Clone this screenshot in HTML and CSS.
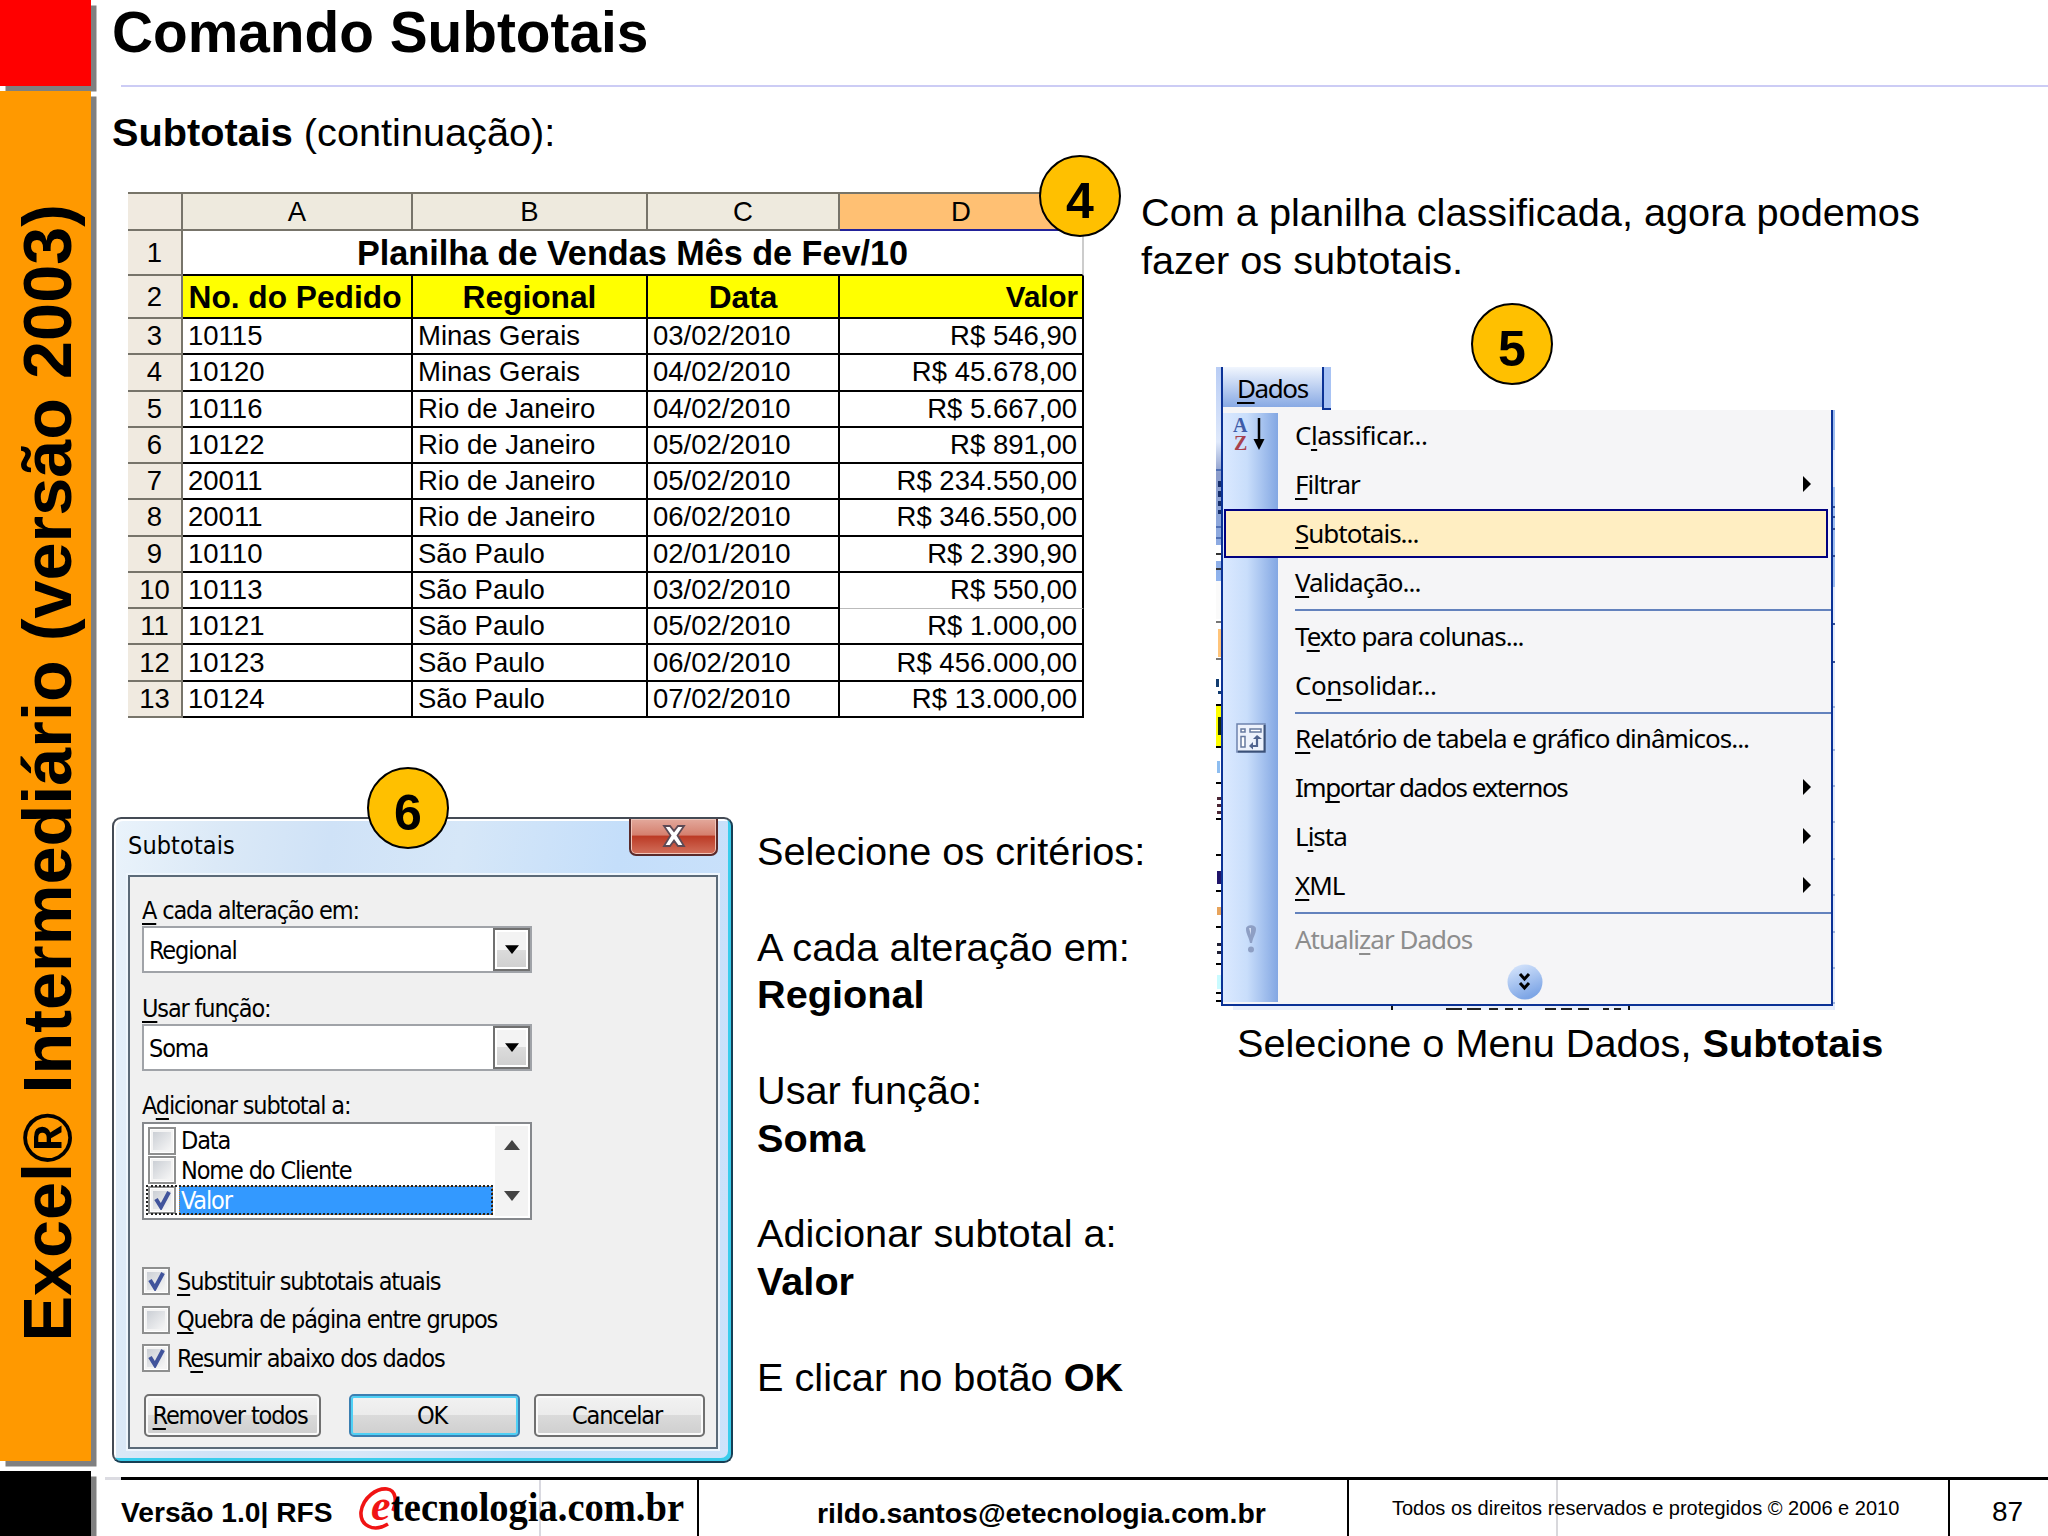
FILE: index.html
```html
<!DOCTYPE html>
<html lang="pt-BR">
<head>
    <meta charset="UTF-8">
    <title>Comando Subtotais</title>
    <link rel="stylesheet" href="styles.css">
</head>
<body>
<div class="slide">
    <aside class="sidebar">
        <div class="block red"></div>
        <div class="block orange"><span class="course">Excel® Intermediário (versão 2003)</span></div>
        <div class="block black"></div>
    </aside>

    <div class="page">
        <h1 class="title">Comando Subtotais</h1>
        <p class="subtitle"><b>Subtotais</b> (continuação):</p>

        <div class="content">
            <div class="left">
                <div class="sheet">
                    <div class="head corner"></div>
                    <div class="head">A</div>
                    <div class="head">B</div>
                    <div class="head">C</div>
                    <div class="head selected">D</div>

                    <div class="num">1</div>
                    <div class="cell merged">Planilha de Vendas Mês de Fev/10</div>

                    <div class="num">2</div>
                    <div class="cell yellow pedido">No. do Pedido</div>
                    <div class="cell yellow">Regional</div>
                    <div class="cell yellow">Data</div>
                    <div class="cell yellow valor">Valor</div>

                    <div class="num">3</div><div class="cell">10115</div><div class="cell">Minas Gerais</div><div class="cell">03/02/2010</div><div class="cell money">R$ 546,90</div>
                    <div class="num">4</div><div class="cell">10120</div><div class="cell">Minas Gerais</div><div class="cell">04/02/2010</div><div class="cell money">R$ 45.678,00</div>
                    <div class="num">5</div><div class="cell">10116</div><div class="cell">Rio de Janeiro</div><div class="cell">04/02/2010</div><div class="cell money">R$ 5.667,00</div>
                    <div class="num">6</div><div class="cell">10122</div><div class="cell">Rio de Janeiro</div><div class="cell">05/02/2010</div><div class="cell money">R$ 891,00</div>
                    <div class="num">7</div><div class="cell">20011</div><div class="cell">Rio de Janeiro</div><div class="cell">05/02/2010</div><div class="cell money">R$ 234.550,00</div>
                    <div class="num">8</div><div class="cell">20011</div><div class="cell">Rio de Janeiro</div><div class="cell">06/02/2010</div><div class="cell money">R$ 346.550,00</div>
                    <div class="num">9</div><div class="cell">10110</div><div class="cell">São Paulo</div><div class="cell">02/01/2010</div><div class="cell money">R$ 2.390,90</div>
                    <div class="num">10</div><div class="cell">10113</div><div class="cell">São Paulo</div><div class="cell">03/02/2010</div><div class="cell money thin">R$ 550,00</div>
                    <div class="num">11</div><div class="cell">10121</div><div class="cell">São Paulo</div><div class="cell">05/02/2010</div><div class="cell money">R$ 1.000,00</div>
                    <div class="num">12</div><div class="cell">10123</div><div class="cell">São Paulo</div><div class="cell">06/02/2010</div><div class="cell money">R$ 456.000,00</div>
                    <div class="num">13</div><div class="cell">10124</div><div class="cell">São Paulo</div><div class="cell">07/02/2010</div><div class="cell money">R$ 13.000,00</div>
                    <span class="badge badge4">4</span>
                </div>

                <div class="lower">
                    <div class="dialog">
                        <div class="dialog-title">
                            <span class="dialog-name">Subtotais</span>
                            <span class="close">
                                <svg width="26" height="24" viewBox="0 0 26 24"><path d="M3 2h6l4 5 4-5h6l-6.500 9.500L23 22h-6l-4-5.500L9 22H3l6.500-10.500z" fill="#fff" stroke="#5c4a55" stroke-width="1.800"/></svg>
                            </span>
                        </div>
                        <div class="dialog-body">
                            <div class="label l1"><u>A</u> cada alteração em:</div>
                            <div class="combo"><span>Regional</span><i class="drop"><svg width="14" height="9" viewBox="0 0 16 10"><path d="M0 0h16L8 10z"/></svg></i></div>
                            <div class="label l2"><u>U</u>sar função:</div>
                            <div class="combo"><span>Soma</span><i class="drop"><svg width="14" height="9" viewBox="0 0 16 10"><path d="M0 0h16L8 10z"/></svg></i></div>
                            <div class="label l3">A<u>d</u>icionar subtotal a:</div>
                            <div class="list">
                                <div class="options">
                                    <div class="option"><i class="check"></i><span>Data</span></div>
                                    <div class="option"><i class="check"></i><span>Nome do Cliente</span></div>
                                    <div class="option active"><i class="check"><svg width="17" height="20" viewBox="0 0 17 20"><path d="M2 9l5 8L15 2" fill="none" stroke="#41549c" stroke-width="4"/></svg></i><span>Valor</span></div>
                                </div>
                                <div class="scroll">
                                    <svg width="16" height="10"><path d="M0 10h16L8 0z" fill="#444"/></svg>
                                    <svg width="16" height="10"><path d="M0 0h16L8 10z" fill="#444"/></svg>
                                </div>
                            </div>
                            <div class="checks">
                                <div class="row"><i class="check"><svg width="17" height="20" viewBox="0 0 17 20"><path d="M2 9l5 8L15 2" fill="none" stroke="#41549c" stroke-width="4"/></svg></i><span><u>S</u>ubstituir subtotais atuais</span></div>
                                <div class="row"><i class="check"></i><span><u>Q</u>uebra de página entre grupos</span></div>
                                <div class="row"><i class="check"><svg width="17" height="20" viewBox="0 0 17 20"><path d="M2 9l5 8L15 2" fill="none" stroke="#41549c" stroke-width="4"/></svg></i><span>R<u>e</u>sumir abaixo dos dados</span></div>
                            </div>
                            <div class="buttons">
                                <div class="btn remove"><u>R</u>emover todos</div>
                                <div class="btn ok">OK</div>
                                <div class="btn">Cancelar</div>
                            </div>
                        </div>
                        <span class="badge badge6">6</span>
                    </div>
                    <div class="criteria">
                        <p>Selecione os critérios:</p>
                        <p>A cada alteração em:<br><b>Regional</b></p>
                        <p>Usar função:<br><b>Soma</b></p>
                        <p>Adicionar subtotal a:<br><b>Valor</b></p>
                        <p>E clicar no botão <b>OK</b></p>
                    </div>
                </div>
            </div>

            <div class="right">
                <p class="intro">Com a planilha classificada, agora podemos<br>fazer os subtotais.</p>
                <div class="shot">
                    <svg class="edge" width="5" height="643">
                        <defs>
                            <linearGradient id="bar" x1="0" y1="0" x2="0" y2="1">
                                <stop offset="0" stop-color="#b9cdf5"/><stop offset=".35" stop-color="#dfe9fb"/>
                                <stop offset=".5" stop-color="#8b9ccb"/><stop offset="1" stop-color="#8fb3ee"/>
                            </linearGradient>
                        </defs>
                        <rect width="5" height="214" fill="url(#bar)"/>
                        <path d="M0 103h5M0 160h5M0 171h5" stroke="#4f6fb4" stroke-width="2"/>
                        <path d="M2 114h3v6h-3zM2 124h3v6h-3zM2 134h3v5h-3zM2 143h3v4h-3z" fill="#152d6b"/>
                        <path d="M0 178h5v16h-5z" fill="#fff"/>
                        <path d="M0 187h5M0 202h5" stroke="#333" stroke-width="2"/>
                        <path d="M0 214h5v38h-5z" fill="#fafafa"/>
                        <path d="M2 262h3v28h-3z" fill="#ffc47a"/>
                        <path d="M0 255h5M0 292h5" stroke="#777" stroke-width="2"/>
                        <path d="M0 312h3v8h-3zM2 324h3v3h-3z" fill="#123c70"/>
                        <path d="M0 338h5v42h-5z" fill="#ff0"/>
                        <path d="M2 350h3v18h-3z" fill="#152b08"/>
                        <path d="M0 338h5M0 380h5M0 416h5M0 452h5M0 488h5M0 524h5M0 560h5M0 597h5M0 626h5M0 634h5" stroke="#000" stroke-width="2"/>
                        <path d="M1 394h3v12h-3z" fill="#8dbdf0"/>
                        <path d="M1 430h4v3h-4zM1 437h4v3h-4zM1 444h4v3h-4z" fill="#4b2634"/>
                        <path d="M1 504h4v13h-4z" fill="#20146a"/>
                        <path d="M1 540h4v8h-4z" fill="#e8a45c"/>
                        <path d="M1 576h4v3h-4zM1 584h4v3h-4z" fill="#202034"/>
                        <path d="M1 608h4v14h-4z" fill="#c9fbff"/>
                    </svg>
                    <div class="menu-wrap">
                        <div class="tabs"><div class="tab"><u>D</u>ados</div><div class="tab-rest"></div></div>
                        <div class="menu">
                            <div class="item">
                                <span class="icon az"><svg width="36" height="40" viewBox="0 0 36 40"><text x="2" y="17" font-size="20" fill="#3f5ca8">A</text><text x="3" y="35" font-size="20" fill="#a8414d">Z</text><path d="M28 3v26" stroke="#000" stroke-width="2.500"/><path d="M22.500 24h11L28 35z"/></svg></span>
                                <span class="loose">C<u>l</u>assificar...</span>
                            </div>
                            <div class="item"><span class="icon"></span><span><u>F</u>iltrar</span><i class="arrow"></i></div>
                            <div class="item hover"><span class="icon"></span><span><u>S</u>ubtotais...</span></div>
                            <div class="item"><span class="icon"></span><span><u>V</u>alidação...</span></div>
                            <div class="sep"></div>
                            <div class="item"><span class="icon"></span><span>T<u>e</u>xto para colunas...</span></div>
                            <div class="item"><span class="icon"></span><span class="loose">Co<u>n</u>solidar...</span></div>
                            <div class="sep"></div>
                            <div class="item">
                                <span class="icon"><svg width="30" height="30" viewBox="0 0 30 30"><path d="M1 1h28v28H1z" fill="#edf2fc" stroke="#6d82ad" stroke-width="1.500"/><path d="M28.500 2v26.500H2" fill="none" stroke="#3c5278" stroke-width="2"/><path d="M5 6h4v3H5zM14 6h11v3H14zM5 13.500h4V24H5z" fill="#fff" stroke="#66799f" stroke-width="1.500"/><path d="M15 23h6v-7" fill="none" stroke="#50648f" stroke-width="2.200"/><path d="M17 16l4-4 5 4zM17 19l-4 4 4 3.500z" fill="#50648f"/></svg></span>
                                <span><u>R</u>elatório de tabela e gráfico dinâmicos...</span>
                            </div>
                            <div class="item"><span class="icon"></span><span class="tight">Im<u>p</u>ortar dados externos</span><i class="arrow"></i></div>
                            <div class="item"><span class="icon"></span><span>L<u>i</u>sta</span><i class="arrow"></i></div>
                            <div class="item"><span class="icon"></span><span><u>X</u>ML</span><i class="arrow"></i></div>
                            <div class="sep"></div>
                            <div class="item disabled">
                                <span class="icon"><svg width="14" height="30" viewBox="0 0 14 30"><path d="M2 5c0-5 10-5 10 0 0 5-3 8-4 14H6C5 13 2 10 2 5z" fill="#8e9fc4"/><path d="M5 4h2v7z" fill="#d5dff3"/><circle cx="7" cy="25.500" r="3" fill="#8e9fc4"/></svg></span>
                                <span>Atuali<u>z</u>ar Dados</span>
                            </div>
                            <div class="more"><svg width="36" height="36" viewBox="0 0 36 36"><defs><linearGradient id="ball" x1="0" y1="0" x2=".4" y2="1"><stop offset="0" stop-color="#dce9fd"/><stop offset="1" stop-color="#7ea6e6"/></linearGradient></defs><circle cx="18" cy="18" r="17.500" fill="url(#ball)"/><path d="M13 10l4.500 5 4.500-5M13 19l4.500 5 4.500-5" fill="none" stroke="#000" stroke-width="3"/></svg></div>
                        </div>
                        <svg class="below" width="612" height="4"><rect x="12" width="600" height="4" fill="#eaf0fc"/><path d="M171 0v4M408 0v4" stroke="#111" stroke-width="2"/><path d="M225 3h16M246 3h14M268 3h9M284 3h8M297 3h4M324 3h11M340 3h11M357 3h11M382 3h6M393 3h7" stroke="#222" stroke-width="2"/></svg>
                    </div>
                    <svg class="edge" width="2" height="643"><rect y="43" width="3" height="600" fill="#e3ebfb"/><path d="M0 43h3v40h-3zM0 120h3v100h-3z" fill="#9dbcf0"/><path d="M0 140h3M0 150h3M0 162h3M0 189h3M0 257h3M0 295h3" stroke="#334f96" stroke-width="2"/><path d="M0 340h3M0 383h3M0 419h3M0 455h3M0 492h3M0 528h3M0 565h3M0 601h3M0 636h3" stroke="#9fb4de" stroke-width="2"/></svg>
                    <span class="badge badge5">5</span>
                </div>
                <p class="caption">Selecione o Menu Dados, <b>Subtotais</b></p>
            </div>
        </div>

        <footer class="footer">
            <div class="foot version">
                <b>Versão 1.0| RFS</b>
                <svg class="logo" width="342" height="56" viewBox="0 0 342 56">
                    <path d="M33 44C18 53 5 45 6 32 8 17 22 8 32 9c9 1 10 12 6 22" fill="none" stroke="#f01414" stroke-width="3.600"/>
                    <text class="logo-e" x="16" y="40">e</text>
                    <text class="logo-name" x="36" y="41" textLength="293" lengthAdjust="spacingAndGlyphs">tecnologia.com.br</text>
                </svg>
            </div>
            <div class="foot mail"><b>rildo.santos@etecnologia.com.br</b></div>
            <div class="foot rights"><span>Todos os direitos reservados e protegidos © 2006 e 2010</span></div>
            <div class="foot number">87</div>
        </footer>
    </div>
</div>
</body>
</html>
```
FILE: styles.css
```css
* {
    box-sizing: border-box;
}
body {
    margin: 0;
    background: #fff;
    color: #000;
    font-family: "Liberation Sans", Arial, sans-serif;
    font-size: 39.700px;
}
p, h1 {
    margin: 0;
}
i {
    font-style: normal;
}
svg {
    display: block;
}
.slide {
    display: flex;
    width: 2048px;
    height: 1536px;
    overflow: hidden;
}

/* coloured strip on the left */
.sidebar {
    width: 112px;
    display: flex;
    flex-direction: column;
}
.block {
    width: 91px;
    box-shadow: 5.5px 5.5px 0 #808080;
}
.red {
    height: 86px;
    background: #f00;
}
.orange {
    height: 1370px;
    margin-top: 5px;
    background: #f90;
    display: flex;
    align-items: center;
    justify-content: center;
}
.black {
    height: 65px;
    margin-top: 10px;
    background: #000;
}
.course {
    writing-mode: vertical-rl;
    text-orientation: sideways;
    transform: rotate(180deg);
    padding-right: 4px;
    padding-top: 6px;
    font-size: 68.400px;
    font-weight: bold;
    line-height: 91px;
    white-space: nowrap;
}

.page {
    flex: 1;
    display: flex;
    flex-direction: column;
}
.title {
    height: 88px;
    font-size: 56.800px;
    line-height: 65px;
    background: linear-gradient(#ccccf5, #ccccf5) 9px 85px / 100% 2px no-repeat;
}
.subtitle {
    height: 104px;
    padding-top: 20px;
    line-height: 48px;
}
.content {
    display: flex;
    height: 1285px;
}
.left {
    width: 1029px;
}
.right {
    flex: 1;
}
.badge {
    position: absolute;
    width: 82px;
    height: 82px;
    border: 2px solid #000;
    border-radius: 50%;
    background: #ffc000;
    font-family: "Liberation Sans", Arial, sans-serif;
    font-size: 50px;
    font-weight: bold;
    line-height: 88px;
    text-align: center;
}

/* spreadsheet */
.sheet {
    position: relative;
    width: 956px;
    margin-left: 16px;
    display: grid;
    grid-template-columns: 55px 230px 235px 192px 244px;
    grid-template-rows: 37px 45px 43px repeat(11, 36.270px);
    border-top: 2px solid #777468;
    font-size: 27.500px;
}
.head, .num, .cell {
    display: flex;
    align-items: center;
    border-right: 2px solid #000;
    border-bottom: 2px solid #000;
    line-height: 32px;
    white-space: nowrap;
}
.head, .num {
    justify-content: center;
    background: #eeeade;
    border-color: #77746a;
}
.corner, .num {
    background: #f0eae0;
}
.head.selected {
    background: #ffc073;
    border-bottom-color: #22229a;
}
.cell {
    padding-left: 5px;
}
.merged {
    grid-column: span 4;
    justify-content: center;
    padding-left: 0;
    border-right-color: #ccc;
    font-size: 34.200px;
    font-weight: bold;
}
.yellow {
    justify-content: center;
    background: #ff0;
    font-size: 31.700px;
    font-weight: bold;
    padding-left: 0;
}
.pedido {
    padding-right: 4px;
}
.yellow.valor {
    justify-content: flex-end;
    padding-right: 4px;
    font-size: 29.500px;
}
.money {
    justify-content: flex-end;
    padding-right: 5px;
}
.thin {
    border-bottom: 1px solid #bbb;
}
.badge4 {
    left: 911px;
    top: -39px;
}

/* dialog */
.lower {
    display: flex;
    margin-top: 99px;
}
.dialog {
    position: relative;
    width: 622px;
    height: 646px;
    padding: 0 13px 0 14px;
    border: 2px solid #444b55;
    border-right-color: #163f55;
    border-bottom-color: #163f55;
    border-radius: 9px;
    background: linear-gradient(100deg, #eaf3fb 0, #dbe9f7 15%, #cfe2f7 30%, #d6e7f8 48%, #c4defa 70%, #cde3fb 100%);
    box-shadow: inset -3px -3px 0 #39cdec, inset 2px 2px 0 #fff;
    font-family: "DejaVu Sans Condensed", "DejaVu Sans", sans-serif;
    font-size: 25px;
    letter-spacing: -1.150px;
}
.dialog u, .menu-wrap u {
    text-decoration-thickness: 2px;
    text-underline-offset: 4px;
    text-decoration-skip-ink: none;
}
.dialog-title {
    height: 56px;
    display: flex;
    justify-content: space-between;
}
.dialog-name {
    line-height: 54px;
    letter-spacing: .100px;
}
.close {
    width: 89px;
    height: 37px;
    display: flex;
    align-items: center;
    justify-content: center;
    border: 2px solid #5a2a2a;
    border-top: 0;
    border-radius: 0 0 7px 7px;
    background: linear-gradient(#e3a99c 0, #d5806f 45%, #bc3b26 50%, #d2705c 100%);
    box-shadow: inset 0 0 0 1px #f0c5ba;
}
.dialog-body {
    height: 574px;
    border: 2px solid #5b6a78;
    background: #f0f0f0;
    padding: 20px 11px 0 12px;
    box-shadow: 0 0 0 2px #eef6fd;
}
.label {
    height: 28px;
    line-height: 28px;
    white-space: nowrap;
}
.l1 {
    margin-bottom: 1px;
}
.l2 {
    margin-top: 22px;
    margin-bottom: 1px;
}
.l3 {
    margin-top: 21px;
}
.combo {
    width: 390px;
    height: 47px;
    display: flex;
    justify-content: space-between;
    border: 2px solid #a0a3a8;
    background: #fff;
    line-height: 45px;
    padding-left: 5px;
}
.drop {
    width: 37px;
    display: flex;
    align-items: center;
    justify-content: center;
    border: 2px solid #707070;
    background: linear-gradient(#f3f3f3 50%, #dcdcdc 50%, #cfcfcf);
    box-shadow: inset 0 0 0 2px #fff;
}
.list {
    width: 390px;
    height: 98px;
    margin-top: 2px;
    display: flex;
    justify-content: space-between;
    border: 2px solid #85888c;
    background: #fff;
    padding: 2px;
}
.options {
    width: 347px;
}
.option {
    height: 29.700px;
    display: flex;
    align-items: center;
    gap: 3px;
    padding-left: 2px;
}
.option span {
    flex: 1;
    line-height: 29px;
    padding-left: 2px;
}
.option.active {
    outline: 2px dotted #222;
    outline-offset: -2px;
}
.active span {
    background: #3399ff;
    color: #fff;
    outline: 1px dotted #c47a2c;
    outline-offset: -1px;
}
.scroll {
    width: 33px;
    background: #f3f3f3;
    display: flex;
    flex-direction: column;
    justify-content: space-between;
    align-items: center;
    padding: 14px 0 15px;
}
.check {
    width: 28px;
    height: 28px;
    flex: none;
    display: flex;
    align-items: center;
    justify-content: center;
    border: 2px solid #8e8f8f;
    background: linear-gradient(135deg, #cbcfd5, #f6f6f6) content-box, #f4f4f4;
    padding: 3px;
    box-shadow: inset 0 0 0 1px #fff;
}
.checks {
    margin-top: 42px;
}
.row {
    height: 38.500px;
    display: flex;
    align-items: center;
    gap: 7px;
    white-space: nowrap;
}
.buttons {
    display: flex;
    margin: 17px 0 0 2px;
}
.btn {
    width: 171px;
    height: 43px;
    border: 2px solid #707070;
    border-radius: 5px;
    background: linear-gradient(#f2f2f2 0, #ebebeb 50%, #dadada 50%, #cfcfcf 100%);
    box-shadow: inset 0 0 0 2px #fafafa;
    line-height: 39px;
    text-align: center;
    white-space: nowrap;
    padding-right: 5px;
}
.remove {
    width: 177px;
}
.ok {
    margin: 0 14px 0 28px;
    border-color: #3c7fb1;
    box-shadow: inset 0 0 0 2px #4fd0f5;
}
.badge6 {
    left: 253px;
    top: -52px;
    letter-spacing: 0;
}
.criteria {
    margin-left: 24px;
    padding-top: 11px;
    line-height: 47.800px;
    white-space: nowrap;
}
.criteria p {
    margin-bottom: 47.800px;
}

/* menu */
.intro {
    height: 175px;
    line-height: 48px;
    margin-top: -4px;
    margin-bottom: 4px;
    white-space: nowrap;
}
.shot {
    position: relative;
    width: 620px;
    height: 643px;
    margin-left: 75px;
    display: flex;
    font-family: "Noto Sans", "Open Sans", sans-serif;
    font-size: 26px;
    letter-spacing: -1px;
}
.menu-wrap {
    width: 612px;
}
.tabs {
    height: 43px;
    display: flex;
}
.tab {
    width: 103px;
    height: 43px;
    padding-left: 14px;
    border: solid #0b3296;
    border-width: 0 2px;
    background: linear-gradient(#f1f6fe, #89aae4 92%, #f4f4f6 93%);
    line-height: 43px;
    letter-spacing: -1.400px;
}
.tab-rest {
    width: 7px;
    background: #a8c3f4;
    border-bottom: 2px solid #0b3296;
}
.menu {
    height: 596px;
    padding-top: 1px;
    border: 2px solid #0b3296;
    border-top: 0;
    background: linear-gradient(90deg, #dbe9ff 0, #c9defb 24px, #83a7e3 55px, transparent 55px) 0 3px / 100% 589px no-repeat, #f5f5f7;
}
.item {
    height: 49px;
    display: flex;
    align-items: center;
    padding-bottom: 1px;
    white-space: nowrap;
}
.icon {
    width: 55px;
    margin-right: 17px;
    display: flex;
    justify-content: center;
}
.az {
    padding-right: 3px;
    font-family: "Liberation Serif", serif;
    font-weight: bold;
    letter-spacing: 0;
}
.loose {
    letter-spacing: -.500px;
}
.tight {
    letter-spacing: -1.450px;
}
.hover {
    margin: 0 3px 0 1px;
    border: 2px solid #000080;
    background: #ffeec2;
}
.hover .icon {
    width: 52px;
}
.arrow {
    margin-left: auto;
    margin-right: 20px;
    border: solid transparent;
    border-width: 8px 0 8px 8px;
    border-left-color: #000;
}
.sep {
    height: 4.600px;
    margin-left: 72px;
    background: linear-gradient(#6382bd, #6382bd) 0 2px / 100% 2px no-repeat;
}
.disabled {
    color: #8d8d8d;
}
.more {
    display: flex;
    justify-content: center;
    padding-right: 4px;
}
.badge5 {
    left: 255px;
    top: -64px;
    letter-spacing: 0;
}
.caption {
    margin: 9px 0 0 96px;
    line-height: 48px;
    white-space: nowrap;
}

/* footer */
.footer {
    height: 59px;
    margin-left: -7px;
    padding: 3px 0 0 16px;
    background: linear-gradient(90deg, #dcdce2 16px, #000 16px) 0 0 / 100% 3px no-repeat;
    display: flex;
    font-size: 28px;
    white-space: nowrap;
}
.foot {
    border-right: 2px solid #000;
    display: flex;
    align-items: center;
}
.version {
    width: 578px;
    background: linear-gradient(#d9d9e0, #d9d9e0) 418px 0 / 2px 100% no-repeat;
}
.version b {
    width: 234px;
    padding-top: 8px;
    font-size: 28.200px;
}
.logo {
    flex: none;
    overflow: visible;
}
.logo-e {
    font: italic bold 44px "Liberation Serif", serif;
    fill: #f01414;
}
.logo-name {
    font: bold 42px "Liberation Serif", serif;
}
.mail {
    width: 650px;
    padding: 10px 0 0 118px;
    font-size: 28.400px;
}
.rights {
    width: 601px;
    padding: 1px 0 0 43px;
    font-size: 20px;
    background: linear-gradient(#d8d8dc, #d8d8dc) 207px 0 / 2px 100% no-repeat;
}
.number {
    border: 0;
    padding: 8px 0 0 42px;
}
```
